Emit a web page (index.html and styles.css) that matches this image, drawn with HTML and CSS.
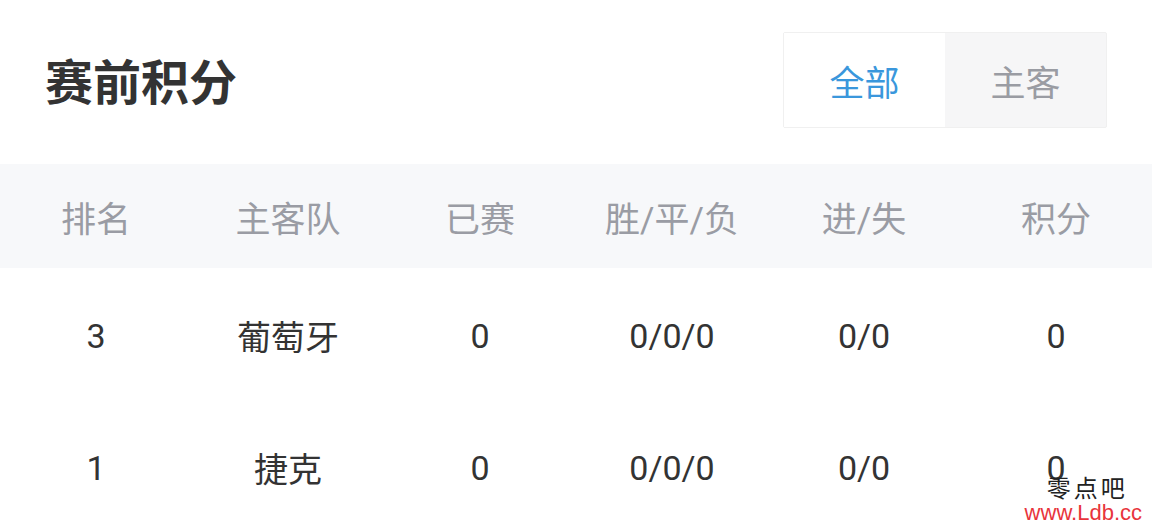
FILE: index.html
```
<!doctype html>
<html>
  <head>
    <meta charset="utf-8" />
    <link rel="stylesheet" href="styles.css">
  </head>
  <body>
    <div class="page">
      <div class="top-bar">
        <div class="title">赛前积分</div>
        <div class="tabs">
          <div class="tab active">全部</div>
          <div class="tab">主客</div>
        </div>
      </div>

      <div class="table">
        <div class="row head">
          <div class="cell">排名</div>
          <div class="cell">主客队</div>
          <div class="cell">已赛</div>
          <div class="cell">胜/平/负</div>
          <div class="cell">进/失</div>
          <div class="cell">积分</div>
        </div>
        <div class="row">
          <div class="cell">3</div>
          <div class="cell">葡萄牙</div>
          <div class="cell">0</div>
          <div class="cell">0/0/0</div>
          <div class="cell">0/0</div>
          <div class="cell">0</div>
        </div>
        <div class="row">
          <div class="cell">1</div>
          <div class="cell">捷克</div>
          <div class="cell">0</div>
          <div class="cell">0/0/0</div>
          <div class="cell">0/0</div>
          <div class="cell">0</div>
        </div>
      </div>

      <div class="watermark">
        <div class="wm-name">零点吧</div>
        <div class="wm-url">www.Ldb.cc</div>
      </div>
    </div>
  </body>
</html>
```

FILE: styles.css
```
* {
  margin: 0;
  padding: 0;
  box-sizing: border-box;
}

body {
  width: 1152px;
  height: 526px;
  overflow: hidden;
  background: #fff;
  font-family: Roboto, 'Noto Sans CJK SC', sans-serif;
  color: #333;
}

.page {
  position: relative;
  height: 100%;
}

.top-bar {
  height: 164px;
  display: flex;
  align-items: center;
  justify-content: space-between;
  padding: 0 45px 0 45px;
}

.title {
  font-family: 'Noto Sans CJK SC', sans-serif;
  font-size: 48px;
  font-weight: 700;
  color: #333;
  margin-top: -6px;
}

.tabs {
  display: flex;
  border: 1px solid #f0f0f0;
  border-radius: 2px;
  background: #f6f6f7;
  margin-top: -4px;
}

.tab {
  width: 161px;
  height: 94px;
  display: flex;
  align-items: center;
  justify-content: center;
  font-family: 'Noto Sans CJK SC', sans-serif;
  font-size: 35px;
  color: #9a9ca3;
}

.tab.active {
  background: #fff;
  color: #3a97dc;
}

.row {
  display: grid;
  grid-template-columns: repeat(6, 1fr);
  height: 132px;
  align-items: center;
}

.row.head {
  height: 104px;
  background: #f7f8fa;
  color: #9a9ca4;
}

.cell {
  text-align: center;
  font-size: 34px;
  padding-top: 3px;
}

.head .cell {
  font-size: 35px;
  padding-top: 0;
}

.watermark {
  position: absolute;
  right: 10px;
  bottom: 2px;
  text-align: center;
}

.wm-name {
  font-family: 'Liberation Serif', 'Noto Sans CJK SC', serif;
  font-size: 24px;
  color: #222;
  letter-spacing: 3px;
  line-height: 26px;
  margin-left: 8px;
}

.wm-url {
  font-family: 'Liberation Sans', sans-serif;
  font-size: 22px;
  color: #e8343c;
  line-height: 22px;
}
```
